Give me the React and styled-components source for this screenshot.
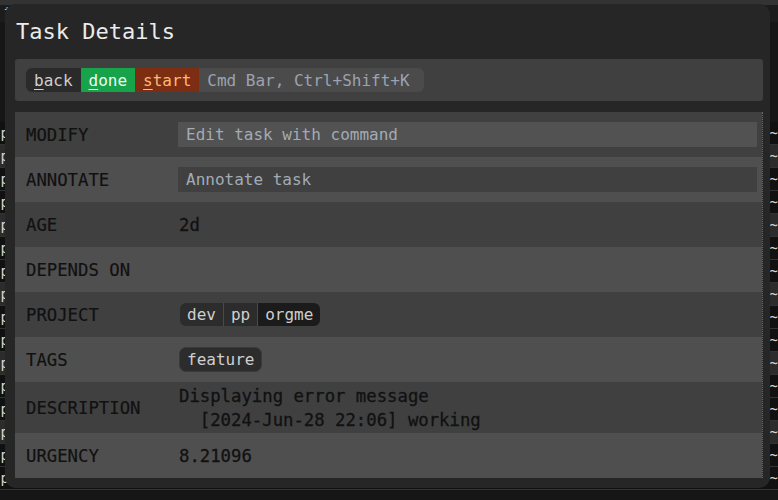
import styled, { createGlobalStyle } from "styled-components";

const GlobalStyle = createGlobalStyle`
  html, body {
    margin: 0;
    padding: 0;
    background: #161616;
  }
  body {
    font-family: "DejaVu Sans Mono", "Liberation Mono", monospace;
  }
`;

const mono = `"DejaVu Sans Mono", "Liberation Mono", monospace`;

const rows = [
  { label: "MODIFY", input: "Edit task with command", inputBg: "#525252" },
  { label: "ANNOTATE", input: "Annotate task", inputBg: "#404040" },
  { label: "AGE", value: "2d" },
  { label: "DEPENDS ON", value: "" },
  { label: "PROJECT", project: ["dev", "pp", "orgme"] },
  { label: "TAGS", tags: ["feature"] },
  {
    label: "DESCRIPTION",
    lines: ["Displaying error message", "  [2024-Jun-28 22:06] working"],
  },
  { label: "URGENCY", value: "8.21096" },
];

// the task list behind the dialog
const backRows = Array.from({ length: 16 }, (_, i) => i);

export default function App() {
  return (
    <>
      <GlobalStyle />
      <Page>
        <BackHeader>
          <span>tasks</span>
        </BackHeader>
        <BackList>
          {backRows.map((i) => (
            <BackRow key={i} $alt={i % 3 === 1}>
              <span>open task item {i + 1}</span>
              <span>~</span>
            </BackRow>
          ))}
        </BackList>

        <Modal>
          <Title>Task Details</Title>
          <Toolbar>
            <Keys>
              <Key $bg="#2a2a2a" $fg="#cfcfcf">
                <u>b</u>ack
              </Key>
              <Key $bg="#16a34a" $fg="#f0fdf4">
                <u>d</u>one
              </Key>
              <Key $bg="#7c2d12" $fg="#fdba74">
                <u>s</u>tart
              </Key>
              <Key $bg="#4b4b4b" $fg="#9ca3af" $wide>
                Cmd Bar, Ctrl+Shift+K
              </Key>
            </Keys>
          </Toolbar>

          <Table>
            {rows.map((r, i) => (
              <Row key={r.label} $alt={i % 2 === 1} $tall={!!r.lines}>
                <Label>{r.label}</Label>
                <Value>
                  {r.input && <Field $bg={r.inputBg}>{r.input}</Field>}
                  {r.value !== undefined && <Plain>{r.value}</Plain>}
                  {r.project && (
                    <Chips>
                      {r.project.map((p, j) => (
                        <Chip key={p} $dark={j === r.project.length - 1}>
                          {p}
                        </Chip>
                      ))}
                    </Chips>
                  )}
                  {r.tags && r.tags.map((t) => <Tag key={t}>{t}</Tag>)}
                  {r.lines && (
                    <Lines>
                      {r.lines.map((l) => (
                        <div key={l}>{l}</div>
                      ))}
                    </Lines>
                  )}
                </Value>
              </Row>
            ))}
          </Table>
        </Modal>
      </Page>
    </>
  );
}

const Page = styled.div`
  position: relative;
  width: 778px;
  height: 500px;
  overflow: hidden;
  background: #161616;
  font-family: ${mono};
`;

const BackHeader = styled.div`
  height: 17px;
  background: #1c1c1c;
  border-top: 5px solid #333;
  color: #bbb;
  font-size: 12px;
  padding: 0 4px;
`;

const BackList = styled.div`
  display: flex;
  flex-direction: column;
  padding-top: 100px;
`;

const BackRow = styled.div`
  display: flex;
  justify-content: space-between;
  height: 22px;
  align-items: center;
  margin-left: -8px;
  font-size: 14px;
  color: #d4d4d4;
  background: ${(p) => (p.$alt ? "#2c2c2c" : "#111")};
  border-bottom: 1px solid #333;
`;

const Modal = styled.div`
  position: absolute;
  left: 5px;
  top: 4px;
  width: 765px;
  height: 484px;
  box-sizing: border-box;
  padding: 12px 7px 10px 10px;
  background: #262626;
  border-radius: 11px;
  display: flex;
  flex-direction: column;
`;

const Title = styled.h2`
  margin: 0 0 11px 1px;
  font-family: ${mono};
  font-weight: normal;
  font-size: 22px;
  line-height: 32px;
  color: #ececec;
`;

const Toolbar = styled.div`
  height: 42px;
  box-sizing: border-box;
  padding: 9px 11px;
  background: #404040;
  border-radius: 3px;
  margin-bottom: 11px;
`;

const Keys = styled.div`
  display: inline-flex;
  height: 24px;
  border-radius: 6px;
  overflow: hidden;
`;

const Key = styled.span`
  display: flex;
  align-items: center;
  padding: ${(p) => (p.$wide ? "0 14px 0 8px" : "0 8px")};
  font-size: 16px;
  color: ${(p) => p.$fg};
  background: ${(p) => p.$bg};

  u {
    text-decoration-thickness: 1px;
    text-underline-offset: 3px;
  }
`;

const Table = styled.div`
  display: flex;
  flex-direction: column;
  border-right: 1px dotted #6a6a6a;
`;

const Row = styled.div`
  display: grid;
  grid-template-columns: 163px 1fr;
  align-items: center;
  height: ${(p) => (p.$tall ? "51px" : "45px")};
  background: ${(p) => (p.$alt ? "#4f4f4f" : "#404040")};
`;

const Label = styled.div`
  padding-left: 11px;
  font-size: 17.3px;
  color: #111;
  -webkit-text-stroke: 0.2px #111;
`;

const Value = styled.div`
  padding-right: 5px;
  display: flex;
  align-items: center;
  font-size: 17.3px;
  color: #111;
  -webkit-text-stroke: 0.3px #111;
`;

const Field = styled.div`
  flex: 1;
  height: 25px;
  display: flex;
  align-items: center;
  padding: 0 8px;
  font-size: 16px;
  color: #a3abb6;
  -webkit-text-stroke: 0;
  background: ${(p) => p.$bg};
`;

const Plain = styled.span`
  padding-left: 1px;
`;

const Chips = styled.div`
  display: inline-flex;
  height: 23px;
  margin-left: 2px;
  border-radius: 6px;
  overflow: hidden;
  -webkit-text-stroke: 0;
`;

const Chip = styled.span`
  display: flex;
  align-items: center;
  padding: 0 7px;
  font-size: 16px;
  color: #cfcfcf;
  background: ${(p) => (p.$dark ? "#1b1b1b" : "#2c2c2c")};
  & + & {
    border-left: 1px solid #4a4a4a;
  }
`;

const Tag = styled.span`
  display: flex;
  align-items: center;
  height: 25px;
  box-sizing: border-box;
  margin-left: 1px;
  padding: 0 7px;
  font-size: 16px;
  color: #cfcfcf;
  -webkit-text-stroke: 0;
  background: #2c2c2c;
  border: 1px solid #3a3a3a;
  border-radius: 7px;
`;

const Lines = styled.div`
  padding-left: 1px;
  line-height: 24px;
  white-space: pre;
`;
